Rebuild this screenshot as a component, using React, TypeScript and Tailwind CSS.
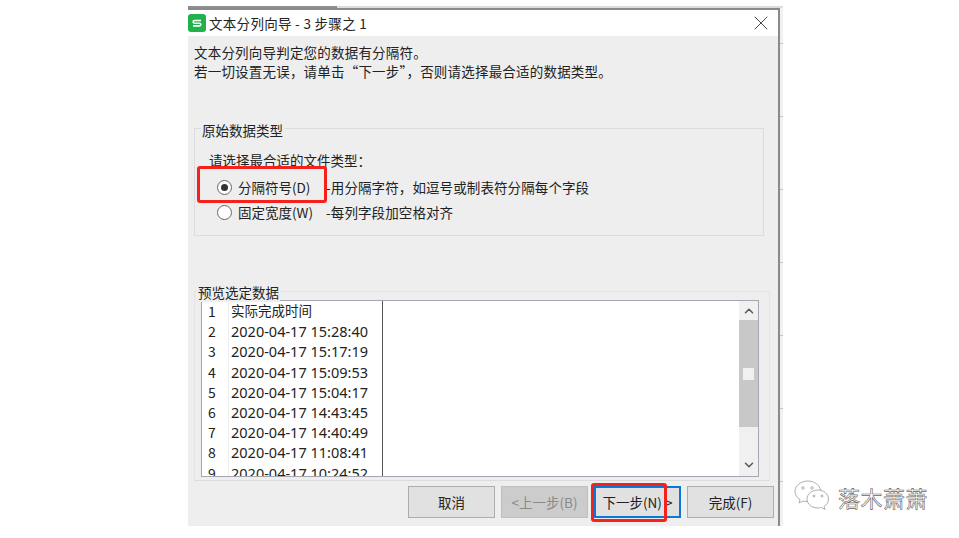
import { ChevronDown, ChevronUp, X } from "lucide-react";

const rows = [
  ["1", "实际完成时间"],
  ["2", "2020-04-17 15:28:40"],
  ["3", "2020-04-17 15:17:19"],
  ["4", "2020-04-17 15:09:53"],
  ["5", "2020-04-17 15:04:17"],
  ["6", "2020-04-17 14:43:45"],
  ["7", "2020-04-17 14:40:49"],
  ["8", "2020-04-17 11:08:41"],
  ["9", "2020-04-17 10:24:52"],
];

function Radio({ checked }: { checked?: boolean }) {
  return (
    <span className="w-[15px] h-[15px] rounded-full border border-[#666] bg-white flex items-center justify-center shrink-0">
      {checked && <span className="w-[7px] h-[7px] rounded-full bg-[#333]" />}
    </span>
  );
}

function WizardButton({ label, variant }: { label: string; variant?: "disabled" | "primary" }) {
  const tone =
    variant === "disabled"
      ? "bg-[#cccccc] border-[#bfbfbf] text-[#8a8a8a]"
      : variant === "primary"
        ? "bg-[#e1e1e1] border-[#0a78d7] text-[#222] border-2"
        : "bg-[#e1e1e1] border-[#adadad] text-[#222]";
  return (
    <div className={`w-[87px] h-[32px] border flex items-center justify-center text-[13.5px] ${tone}`}>{label}</div>
  );
}

export default function App() {
  return (
    <div
      className="relative w-[959px] h-[538px] bg-white overflow-hidden pl-[188px] pt-[6px] text-[#222] text-[13.5px] leading-[20px]"
      style={{ fontFamily: '"Noto Sans CJK SC", "Noto Sans", sans-serif' }}
    >
      {/* spreadsheet showing behind the dialog */}
      <div className="w-[595px] h-[520px] bg-[#f1f1f1] bg-[repeating-linear-gradient(to_bottom,transparent_0,transparent_37px,#c4c4c4_37px,#c4c4c4_38px,transparent_38px,transparent_73px)]">
        <div className="h-[2px] flex">
          <div className="w-[149px] bg-[#8f8f8f]" />
          <div className="flex-1 bg-[#dddddd]" />
        </div>
        <div className="w-[592px] h-[518px] border-t-2 border-r-2 border-[#8a8a8a] bg-white flex flex-col">
          {/* title bar */}
          <div className="h-[26px] shrink-0 flex items-center bg-white">
            <svg width="18" height="18" viewBox="0 0 18 18" className="mr-[3px] shrink-0">
              <rect width="18" height="18" rx="3" fill="#22b24c" />
              <path d="M13 6.500H6.500a1.200 1.200 0 0 0 0 2.700h5a1.200 1.200 0 0 1 0 2.700H5" fill="none" stroke="#fff" strokeWidth="1.600" />
            </svg>
            <span className="tracking-[0.3px]">文本分列向导 - 3 步骤之 1</span>
            <X className="ml-auto mr-[5px] text-[#333]" size={24} strokeWidth={0.9} />
          </div>

          {/* dialog body */}
          <div className="flex-1 bg-[#eeeeee] flex flex-col px-[6px] pt-[7px]">
            <p className="leading-[19px] tracking-[0.2px]">
              文本分列向导判定您的数据有分隔符。
              <br />
              若一切设置无误，请单击“下一步”，否则请选择最合适的数据类型。
            </p>

            <div className="relative mt-[47px] w-[570px] h-[108px] border border-[#dcdcdc] pl-[14px] pt-[21px]">
              <span className="absolute left-[6px] -top-[9px] bg-[#eeeeee] px-[1px]">原始数据类型</span>
              <div>请选择最合适的文件类型：</div>
              <div className="flex items-center mt-[7px] h-[20px] pl-[8px]">
                <Radio checked />
                <span className="ml-[6px] w-[88px]">分隔符号(D)</span>
                <span className="tracking-[0.1px]">-用分隔字符，如逗号或制表符分隔每个字段</span>
              </div>
              <div className="flex items-center mt-[5px] h-[20px] pl-[8px]">
                <Radio />
                <span className="ml-[6px] w-[88px]">固定宽度(W)</span>
                <span className="tracking-[0.1px]">-每列字段加空格对齐</span>
              </div>
            </div>

            <div className="relative mt-[55px] w-[576px] h-[190px] border border-[#e4e4e4] border-b-[#dcdcdc] pl-[6px] pt-[8px]">
              <span className="absolute left-[2px] -top-[10px] bg-[#eeeeee] px-[1px]">预览选定数据</span>
              <div className="w-[558px] h-[177px] border border-[#a6a6b0] bg-white flex overflow-hidden">
                <div className="w-[181px] shrink-0 border-r border-[#555] h-full overflow-hidden">
                  {rows.map(([n, value]) => (
                    <div key={n} className="h-[20.2px] flex items-center whitespace-nowrap">
                      <span className="w-[27px] pl-[6px] h-full border-r border-[#eeeeee] flex items-center text-[14px]">{n}</span>
                      <span
                        className={n === "1" ? "pl-[2px] text-[13.5px]" : "pl-[2px] text-[14.5px]"}
                        style={{ fontFamily: '"Noto Sans", "Noto Sans CJK SC", sans-serif' }}
                      >
                        {value}
                      </span>
                    </div>
                  ))}
                </div>
                <div className="flex-1" />
                <div className="w-[19px] shrink-0 bg-[#f0f0f0] flex flex-col items-center text-[#555]">
                  <div className="h-[19px] flex items-center justify-center">
                    <ChevronUp size={14} strokeWidth={2.5} />
                  </div>
                  <div className="w-full h-[107px] bg-[#c8c8c8] flex items-center justify-center">
                    <div className="w-[11px] h-[12px] bg-[#f0f0f0]" />
                  </div>
                  <div className="mt-auto h-[22px] flex items-center justify-center">
                    <ChevronDown size={14} strokeWidth={2.5} />
                  </div>
                </div>
              </div>
            </div>

            <div className="mt-[5px] flex justify-end gap-[6px] w-[580px]">
              <WizardButton label="取消" />
              <WizardButton label="<上一步(B)" variant="disabled" />
              <WizardButton label="下一步(N) >" variant="primary" />
              <WizardButton label="完成(F)" />
            </div>
          </div>
        </div>
      </div>

      {/* red annotations on top of the screenshot */}
      <div className="absolute left-[197px] top-[166px] w-[130px] h-[37px] border-[3px] border-[#f5211a] rounded-[3px]" />
      <div className="absolute left-[591px] top-[483px] w-[76px] h-[39px] border-[3px] border-[#f5211a] rounded-[3px]" />

      {/* watermark */}
      <div className="absolute left-[794px] top-[480px] flex items-center">
        <svg width="36" height="33" viewBox="0 0 36 33" fill="none" stroke="#9a9a9a" strokeWidth="0.8">
          <path d="M14 1C7 1 1 5.500 1 11.500c0 3.500 2 6 5 8l-1 3.500 4-2c1.500.4 3 .6 4.500.6" fill="#fff" />
          <path d="M14 1c6 0 11.500 3.800 12.500 9" />
          <path d="M24 10c-6 0-11 3.800-11 9s5 9 11 9c1.300 0 2.500-.2 3.500-.5l3.500 2-1-3c2.800-1.700 4.500-4.300 4.500-7.500 0-5.200-5-9-10.500-9z" fill="#fff" />
          <circle cx="9" cy="8" r="1.200" />
          <circle cx="18" cy="8" r="1.200" />
          <circle cx="20" cy="16" r="1" />
          <circle cx="28" cy="16" r="1" />
        </svg>
        <span className="ml-[8px] text-[22px] leading-[30px] tracking-[0.5px] text-white [-webkit-text-stroke:0.6px_#666]">落木萧萧</span>
      </div>
    </div>
  );
}
